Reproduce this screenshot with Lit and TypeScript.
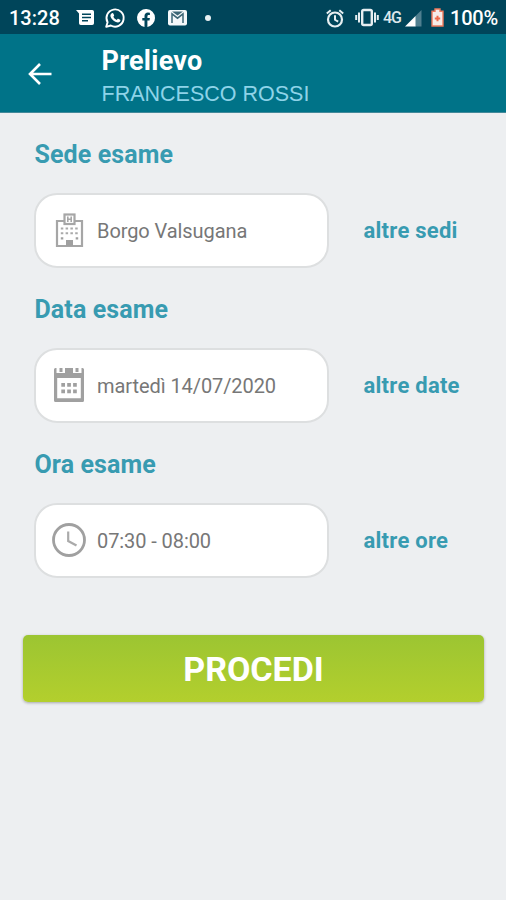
import { LitElement, html, svg, css } from "lit";
import { customElement, property } from "lit/decorators.js";

const icons = {
  message: svg`<path fill="#fff" fill-rule="evenodd" d="M0 0H16.2Q18 0 18 1.8V13.2Q18 15 16.2 15H4.8Q3 15 3 13.2V3.6ZM6 3.5V5H15V3.5ZM6 6.7V8.2H15V6.7ZM6 9.9V11.4H12V9.9Z"/>`,
  whatsapp: svg`<path fill="none" stroke="#fff" stroke-width="1.9" stroke-linejoin="round" d="M1.2 18.8 2.6 14.3A8.6 8.6 0 1 1 5.8 17.5Z"/><path fill="#fff" d="M6.8 5.2c.5-.5 1.2-.4 1.5.2l.8 1.8c.2.5-.4 1.1-.8 1.6.8 1.5 1.9 2.5 3.4 3.1.5-.5 1-1.3 1.5-1.1l1.9.9c.6.3.2 1.5-.4 2.1-.9.8-2.3.9-4.4-.1-2.3-1.1-4-3.1-4.7-5-.5-1.5 0-2.6 1.2-3.5Z"/>`,
  facebook: svg`<path fill="#fff" d="M18 9A9 9 0 1 0 7.5 17.9V11.6H5.3V9H7.5V7C7.5 4.7 8.9 3.5 10.9 3.5L12.9 3.7V5.9H11.8C10.7 5.9 10.4 6.5 10.4 7.3V9H12.9L12.5 11.6H10.4V17.9A9 9 0 0 0 18 9Z"/>`,
  gmail: svg`<rect width="19" height="15.5" rx="2" fill="#f4f8fa"/><path fill="none" stroke="#3c6675" stroke-width="1.5" d="M4 13V3.8L9.5 8.2 15 3.8V13"/><path fill="#3c6675" d="M4 1.5H15L9.5 5.5Z"/>`,
  alarm: svg`<circle cx="9" cy="10.5" r="7" fill="none" stroke="#e6eef1" stroke-width="2.2"/><path fill="none" stroke="#e6eef1" stroke-width="2" d="M.8 4.4 4.7 1.2M17.2 4.4 13.3 1.2M9 6.2V10.8L12.2 12.7"/>`,
  vibrate: svg`<rect x="7.2" y="1" width="9.6" height="15" rx="1.5" fill="none" stroke="#e6eef1" stroke-width="2.4"/><path stroke="#e6eef1" stroke-width="2" d="M4 3.5V13.5M1.2 6V11M20 3.5V13.5M22.8 6V11"/>`,
  signal: svg`<path fill="#4f7f8f" d="M10 6.5 16.5 0V16.5H10Z"/><path fill="#fff" d="M0 16.5 10.5 6V16.5Z"/>`,
  battery: svg`<path fill="#f6ece8" stroke="#ee7a5c" stroke-width="1.4" d="M1 3.2H4V1H9V3.2H12V18H1Z"/><path stroke="#ee6a4a" stroke-width="2" d="M6.5 7.8V13.2M3.8 10.5H9.2"/>`,
  back: svg`<path fill="none" stroke="#fff" stroke-width="2.6" d="M23.5 11H2.5M12 1 2 11 12 21"/>`,
  hospital: svg`<g fill="none" stroke="#a6a6a6" stroke-width="2.2"><path d="M9 8H2V33H27V8H20"/><rect x="9.5" y="1.5" width="10" height="9.5"/><path stroke-width="1.6" d="M12.8 3.5V9M16.2 3.5V9M12.8 6.2H16.2"/></g><path stroke="#aaa" stroke-width="2" stroke-dasharray="2.5 2.3" d="M5.8 15.5H23.5M5.8 20.3H23.5"/><path fill="#a0a0a0" d="M5.8 24.3h2.5v2.2h-2.5zM20.7 24.3h2.5v2.2h-2.5zM11 27h7v6h-7z"/>`,
  calendar: svg`<path fill="#a0a0a0" fill-rule="evenodd" d="M1.5 0H2.5V5H11V0H19V5H27.5V0H28.5Q30 0 30 1.5V32.5Q30 34 28.5 34H1.5Q0 34 0 32.5V1.5Q0 0 1.5 0ZM3.2 10V30.2H26.8V10Z"/><path fill="#a0a0a0" d="M5.5 0H8.5V4H5.5ZM21.5 0H24.5V4H21.5ZM7.3 15h3.7v3.7H7.3zM13.2 15h3.7v3.7h-3.7zM19.1 15h3.7v3.7h-3.7zM7.3 21.5h3.7v3.7H7.3zM13.2 21.5h3.7v3.7h-3.7zM19.1 21.5h3.7v3.7h-3.7z"/>`,
  clock: svg`<circle cx="17" cy="17" r="15.5" fill="none" stroke="#a0a0a0" stroke-width="2.8"/><path fill="none" stroke="#aaa" stroke-width="2.2" d="M16.2 8.5V18L24.5 22.5"/>`,
};

@customElement("status-bar")
class StatusBar extends LitElement {
  static styles = css`
    :host { display: flex; align-items: flex-start; justify-content: space-between; height: 34px; background: #00455a; color: #fff; box-sizing: border-box; padding: 0 9px 0 9px; font: 500 20px/36px Roboto, sans-serif; }
    .group { display: flex; }
    svg { display: block; overflow: visible; flex: none; }
    .time { width: 67px; }
    .message { margin-top: 10px; }
    .whatsapp { margin: 8px 0 0 11px; }
    .facebook { margin: 9px 0 0 12px; }
    .gmail { margin: 10px 0 0 13px; }
    .dot { width: 6px; height: 6px; border-radius: 50%; background: #e8f0f2; margin: 15px 0 0 18px; }
    .alarm { margin-top: 9px; }
    .vibrate { margin: 9px 0 0 11px; }
    .net { font-size: 16px; font-weight: 500; width: 22px; margin-left: 4px; letter-spacing: -1px; color: #dce7eb; }
    .signal { margin-top: 10px; }
    .battery { margin: 8px 6px 0 9px; }
    .level { width: 47px; letter-spacing: -0.2px; }
  `;
  render() {
    return html`
      <div class="group">
        <span class="time">13:28</span>
        <svg class="message" width="18" height="15">${icons.message}</svg>
        <svg class="whatsapp" width="20" height="20">${icons.whatsapp}</svg>
        <svg class="facebook" width="18" height="18">${icons.facebook}</svg>
        <svg class="gmail" width="19" height="16">${icons.gmail}</svg>
        <span class="dot"></span>
      </div>
      <div class="group">
        <svg class="alarm" width="18" height="18">${icons.alarm}</svg>
        <svg class="vibrate" width="24" height="17">${icons.vibrate}</svg>
        <span class="net">4G</span>
        <svg class="signal" width="17" height="17">${icons.signal}</svg>
        <svg class="battery" width="13" height="19">${icons.battery}</svg>
        <span class="level">100%</span>
      </div>`;
  }
}

@customElement("exam-field")
class ExamField extends LitElement {
  @property() heading = "";
  @property() value = "";
  @property() action = "";
  @property() icon: "hospital" | "calendar" | "clock" = "clock";
  static styles = css`
    :host { display: block; height: 155px; color: #389bb1; font-family: Roboto, sans-serif; }
    h2 { margin: 0; padding-left: 0.5px; font-size: 25px; line-height: 31px; font-weight: 700; height: 54px; letter-spacing: 0.1px; }
    .row { display: flex; align-items: center; }
    .box { width: 295px; height: 75px; box-sizing: border-box; border: 2.5px solid #dddfe0; border-radius: 23px; background: #fff; display: flex; align-items: center; padding-left: 15px; }
    .icon { width: 36px; display: flex; justify-content: center; margin-right: 10px; }
    svg { display: block; overflow: visible; margin-bottom: 1px; }
    .value { font-size: 20px; font-weight: 400; color: #777; letter-spacing: -0.08px; }
    .action { margin-left: 34.5px; font-size: 22px; font-weight: 700; letter-spacing: 0.25px; }
  `;
  render() {
    const w = { hospital: 29, calendar: 30, clock: 34 }[this.icon];
    return html`
      <h2>${this.heading}</h2>
      <div class="row">
        <div class="box">
          <span class="icon"><svg width=${w} height="34">${icons[this.icon]}</svg></span>
          <span class="value">${this.value}</span>
        </div>
        <span class="action">${this.action}</span>
      </div>`;
  }
}

@customElement("app-root")
class AppRoot extends LitElement {
  static styles = css`
    :host { display: block; height: 900px; background: #edeff1; font-family: Roboto, sans-serif; overflow: hidden; }
    header { height: 79px; box-sizing: border-box; background: #007388; display: flex; color: #fff; padding: 0 0 0 28px; border-bottom: 1px solid #43899a; }
    .back { display: block; margin-top: 29px; overflow: visible; }
    .titles { margin-left: 49.5px; padding-top: 11px; }
    .title { font-size: 27px; line-height: 32px; font-weight: 700; letter-spacing: 0.25px; }
    .name { font: 21.5px/26px "Liberation Sans", sans-serif; color: #8ed3e8; margin-top: 4px; white-space: nowrap; }
    main { padding: 26px 0 0 34px; }
    .proceed { display: block; width: 461px; height: 67px; margin: 31px 0 0 -11px; padding: 0; border: 0; border-radius: 5px; background: linear-gradient(#9cc532, #b3cf2d); box-shadow: 0 1px 3px rgba(0, 0, 0, .3); color: #fff; font: 700 34px/68px Roboto, sans-serif; }
  `;
  render() {
    return html`
      <status-bar></status-bar>
      <header>
        <svg class="back" width="24" height="22">${icons.back}</svg>
        <div class="titles">
          <div class="title">Prelievo</div>
          <div class="name">FRANCESCO ROSSI</div>
        </div>
      </header>
      <main>
        <exam-field heading="Sede esame" value="Borgo Valsugana" action="altre sedi" icon="hospital"></exam-field>
        <exam-field heading="Data esame" value="martedì 14/07/2020" action="altre date" icon="calendar"></exam-field>
        <exam-field heading="Ora esame" value="07:30 - 08:00" action="altre ore" icon="clock"></exam-field>
        <button class="proceed">PROCEDI</button>
      </main>`;
  }
}
